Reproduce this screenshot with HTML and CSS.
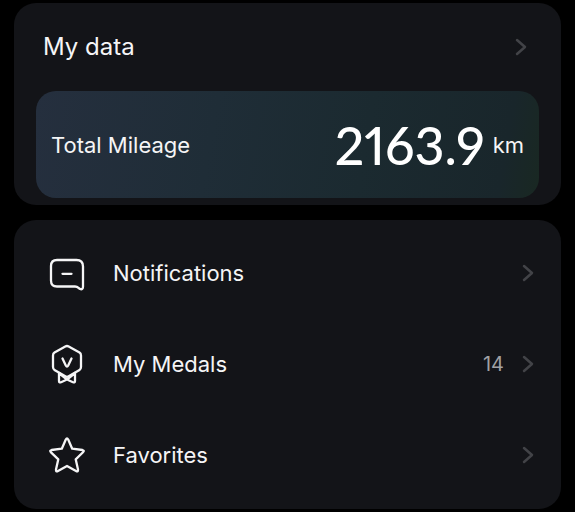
FILE: index.html
```html
<!DOCTYPE html>
<html lang="en">
<head>
<meta charset="utf-8">
<meta name="viewport" content="width=device-width, initial-scale=1">
<title>My data</title>
<link rel="stylesheet" href="styles.css">
</head>
<body>
<main class="page">
  <section class="card data-card">
    <a class="card-header" href="#data">
      <h1 class="card-title">My data</h1>
      <svg class="chevron" viewBox="0 0 12 18" aria-hidden="true"><path d="M2 2l8 7-8 7"/></svg>
    </a>
    <div class="mileage">
      <span class="mileage-label">Total Mileage</span>
      <span class="mileage-value">2163.9</span>
      <span class="mileage-unit">km</span>
    </div>
  </section>
  <nav class="card menu">
    <a class="row" href="#notifications">
      <svg class="icon" viewBox="0 0 40 40" aria-hidden="true"><path d="M10 7H29.500Q36 7 36 13.500V33.500Q36 37 33 36C31 34.800 31 33.500 28 33.500H10Q4 33.500 4 27.500V13Q4 7 10 7Z"/><path d="M15.500 20.800h9"/></svg>
      <span class="row-label">Notifications</span>
      <svg class="chevron" viewBox="0 0 12 18" aria-hidden="true"><path d="M2 2l8 7-8 7"/></svg>
    </a>
    <a class="row" href="#medals">
      <svg class="icon" viewBox="0 0 40 40" aria-hidden="true"><path d="M18.300 2.500Q20 1.500 21.700 2.500L32.500 8.600Q34 9.500 34 11.500V23Q34 25 32.500 25.900L21.700 32.300Q20 33.300 18.300 32.300L7.500 25.900Q6 25 6 23V11.500Q6 9.500 7.500 8.600Z"/><path d="M15.500 14.500L18.800 21.500Q20 23.600 21.200 21.500L24.500 14.500"/><path d="M12 29V37Q12 39 14 38.200L20 35.500L26 38.200Q28 39 28 37V29M12.500 29.500L20 35.500L27.500 29.500"/></svg>
      <span class="row-label">My Medals</span>
      <span class="row-count">14</span>
      <svg class="chevron" viewBox="0 0 12 18" aria-hidden="true"><path d="M2 2l8 7-8 7"/></svg>
    </a>
    <a class="row" href="#favorites">
      <svg class="icon" viewBox="0 0 40 40" aria-hidden="true"><path d="M18.800 4.500Q20 2.500 21.200 4.500L25.200 13.700L35.500 15Q37.800 15.500 36 17.300L28.700 24.300L31 34.500Q31.200 37.200 29 36L20 31L11 36Q8.800 37.200 9 34.500L11.300 24.300L4 17.300Q2.200 15.500 4.500 15L14.800 13.700Z"/></svg>
      <span class="row-label">Favorites</span>
      <svg class="chevron" viewBox="0 0 12 18" aria-hidden="true"><path d="M2 2l8 7-8 7"/></svg>
    </a>
  </nav>
</main>
</body>
</html>
```
FILE: styles.css
```css
* {
  box-sizing: border-box;
}

body {
  margin: 0;
  background: #000;
  color: #f5f5f6;
  font-family: Inter, "Liberation Sans", sans-serif;
  font-size: 22px;
  line-height: 28px;
}

a {
  color: inherit;
  text-decoration: none;
}

.page {
  display: flex;
  flex-direction: column;
  gap: 15px;
  padding: 3px 14px;
}

.card {
  background: #131418;
  border-radius: 22px;
}

.data-card {
  padding: 0 22px 7px;
}

.card-header {
  display: flex;
  align-items: center;
  justify-content: space-between;
  height: 88px;
  padding: 0 12px 0 7px;
}

.card-title {
  margin: 0;
  font-size: 24px;
  font-weight: 400;
}

.chevron {
  flex: none;
  width: 12px;
  height: 18px;
  fill: none;
  stroke: #424347;
  stroke-width: 2.5;
  stroke-linecap: round;
  stroke-linejoin: round;
}

.mileage {
  display: flex;
  align-items: center;
  height: 107px;
  padding: 0 15px;
  border-radius: 20px;
  background: linear-gradient(100deg, #252f3e 0%, #1f2d37 35%, #1b2a30 65%, #19262b 92%, #192822 100%);
}

.mileage-label {
  flex: 1;
}

.mileage-value {
  color: #fff;
  font-family: Lato, sans-serif;
  font-size: 52px;
  font-weight: 500;
  font-variant-numeric: proportional-nums;
  line-height: 64px;
}

.mileage-unit {
  margin-left: 8px;
}

.menu {
  padding: 7px 27px 9px 33px;
}

.row {
  display: flex;
  align-items: center;
  height: 91px;
}

.icon {
  flex: none;
  width: 40px;
  height: 40px;
  margin-right: 26px;
  fill: none;
  stroke: #f5f5f6;
  stroke-width: 2.3;
  stroke-linecap: round;
  stroke-linejoin: round;
}

.row-label {
  flex: 1;
}

.row-count {
  margin-right: 18px;
  color: #a0a1a4;
  font-size: 20px;
}
```
